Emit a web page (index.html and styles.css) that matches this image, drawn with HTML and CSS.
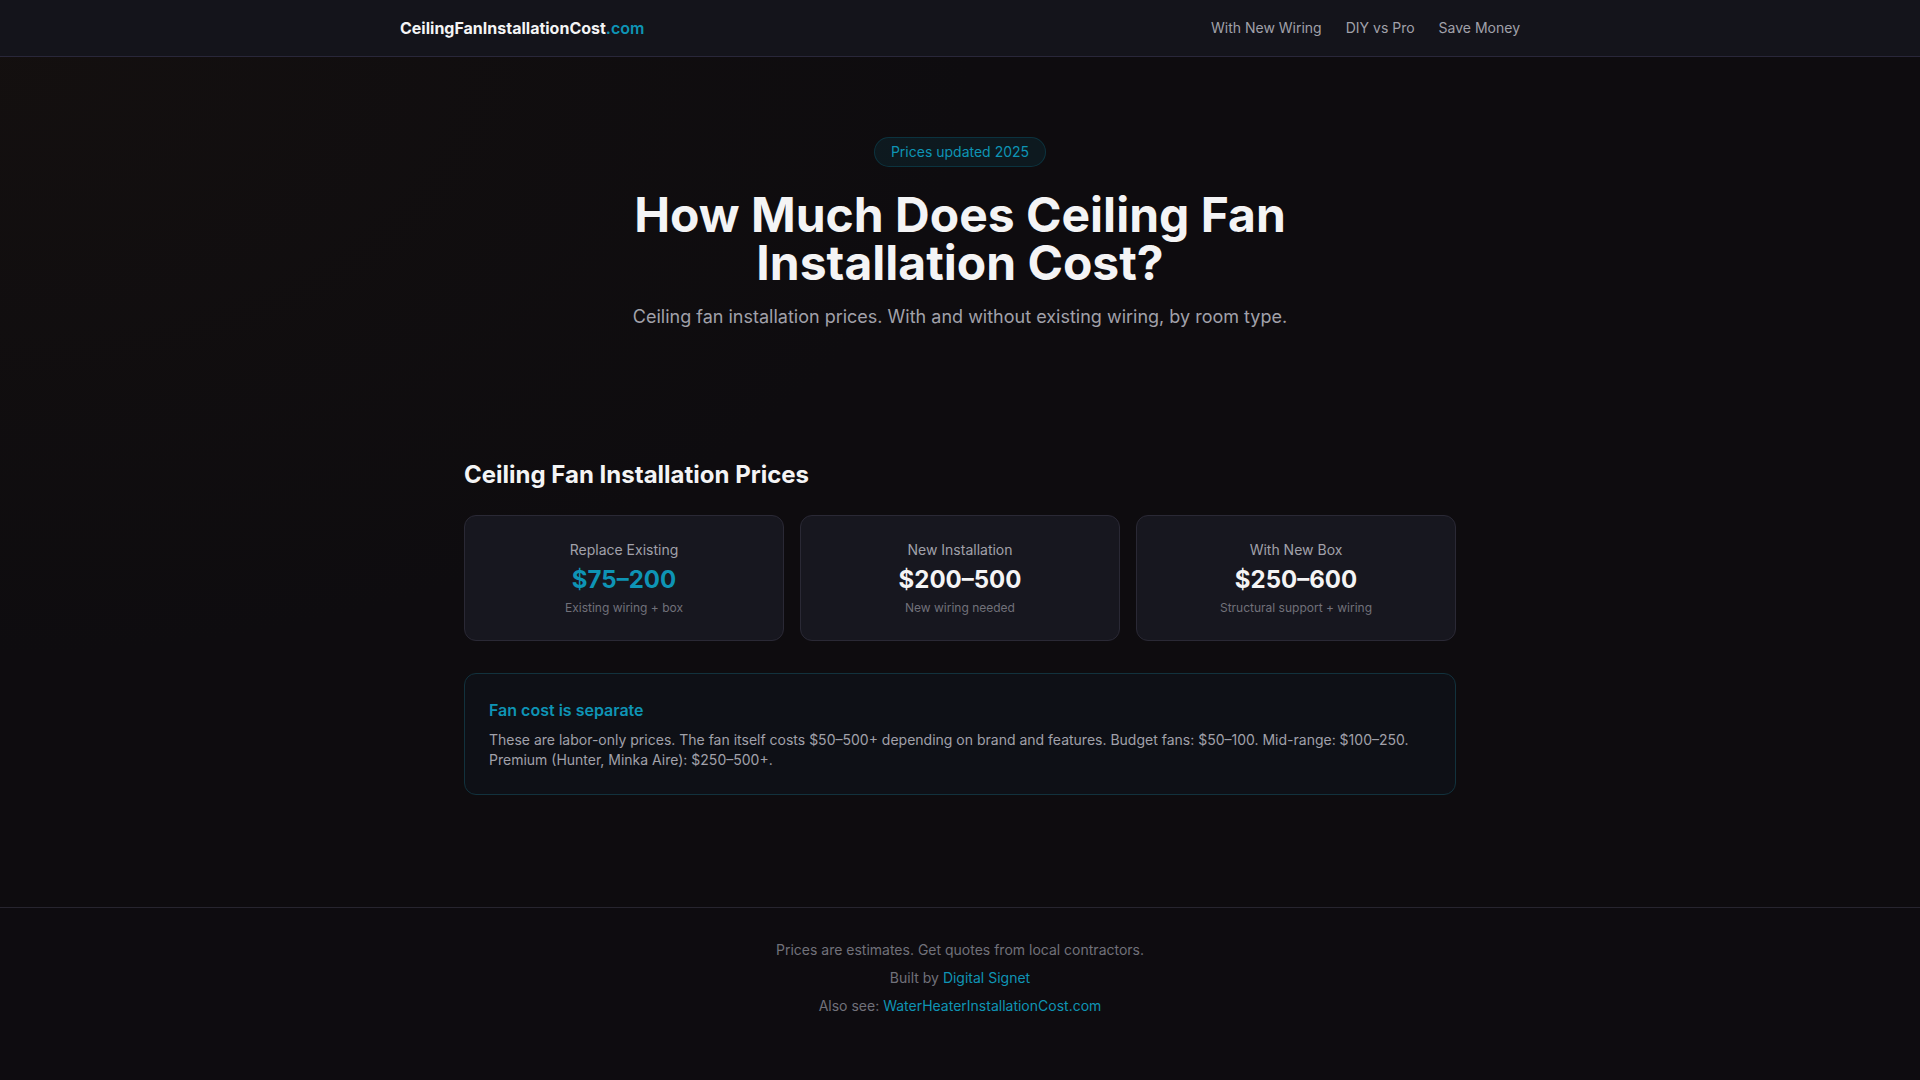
FILE: index.html
```html
<!DOCTYPE html>
<html lang="en">
<head>
<meta charset="utf-8">
<title>How Much Does Ceiling Fan Installation Cost?</title>
<link rel="stylesheet" href="styles.css">
</head>
<body>
<header class="site-header">
  <div class="header-inner">
    <a class="logo" href="#">CeilingFanInstallationCost<span class="logo-tld">.com</span></a>
    <nav class="nav">
      <a href="#">With New Wiring</a>
      <a href="#">DIY vs Pro</a>
      <a href="#">Save Money</a>
    </nav>
  </div>
</header>
<main class="main">
  <section class="hero">
    <span class="badge">Prices updated 2025</span>
    <h1 class="hero-title">How Much Does Ceiling Fan Installation Cost?</h1>
    <p class="hero-sub">Ceiling fan installation prices. With and without existing wiring, by room type.</p>
  </section>
  <section class="prices">
    <h2 class="section-title">Ceiling Fan Installation Prices</h2>
    <div class="cards">
      <div class="card">
        <div class="card-label">Replace Existing</div>
        <div class="card-price accent">$75–200</div>
        <div class="card-note">Existing wiring + box</div>
      </div>
      <div class="card">
        <div class="card-label">New Installation</div>
        <div class="card-price">$200–500</div>
        <div class="card-note">New wiring needed</div>
      </div>
      <div class="card">
        <div class="card-label">With New Box</div>
        <div class="card-price">$250–600</div>
        <div class="card-note">Structural support + wiring</div>
      </div>
    </div>
    <div class="callout">
      <h3 class="callout-title">Fan cost is separate</h3>
      <p class="callout-text">These are labor-only prices. The fan itself costs $50–500+ depending on brand and features. Budget fans: $50–100. Mid-range: $100–250. Premium (Hunter, Minka Aire): $250–500+.</p>
    </div>
  </section>
</main>
<footer class="site-footer">
  <p>Prices are estimates. Get quotes from local contractors.</p>
  <p>Built by <a href="#">Digital Signet</a></p>
  <p>Also see: <a href="#">WaterHeaterInstallationCost.com</a></p>
</footer>
</body>
</html>
```

FILE: styles.css
```css
* { box-sizing: border-box; }
html, body { margin: 0; padding: 0; }
body {
  font-family: Inter, "Noto Sans", "Liberation Sans", sans-serif;
  background: #0e0c10;
  color: #f4f4f5;
  min-height: 100vh;
  -webkit-font-smoothing: antialiased;
}
a { text-decoration: none; color: inherit; }

.site-header {
  height: 57px;
  background: #14141b;
  border-bottom: 1px solid #29273a;
}
.header-inner {
  max-width: 1152px;
  margin: 0 auto;
  padding: 0 16px;
  height: 56px;
  display: flex;
  align-items: center;
  justify-content: space-between;
}
.logo {
  font-size: 16px;
  font-weight: 700;
  color: #f4f4f5;
}
.logo-tld { color: #0e94b5; font-weight: 600; }
.nav { display: flex; gap: 24px; }
.nav a { font-size: 14px; color: #a1a1aa; line-height: 20px; }

.main {
  background: radial-gradient(ellipse 1300px 800px at 0% 0%, rgba(36, 26, 16, 0.25), rgba(0,0,0,0) 75%), #0e0c0f;
}
.hero {
  padding: 80px 16px 64px;
  display: flex;
  flex-direction: column;
  align-items: center;
  text-align: center;
}
.badge {
  display: inline-block;
  font-size: 14px;
  line-height: 20px;
  padding: 4px 16px;
  border-radius: 999px;
  color: #0e94b5;
  background: rgba(8, 145, 178, 0.1);
  border: 1px solid rgba(8, 145, 178, 0.22);
  margin-bottom: 24px;
}
.hero-title {
  margin: 0;
  max-width: 768px;
  font-size: 48px;
  line-height: 48px;
  font-weight: 700;
  letter-spacing: 0;
  color: #f4f4f5;
}
.hero-sub {
  margin: 16px 0 0;
  font-size: 18px;
  line-height: 28px;
  color: #a1a1aa;
}

.prices {
  max-width: 1024px;
  margin: 0 auto;
  padding: 64px 16px 112px;
}
.section-title {
  margin: 0 0 24px;
  font-size: 24px;
  line-height: 32px;
  font-weight: 700;
  color: #f4f4f5;
}
.cards {
  display: grid;
  grid-template-columns: repeat(3, 1fr);
  gap: 16px;
}
.card {
  background: #17171f;
  border: 1px solid #2a2935;
  border-radius: 12px;
  padding: 24px;
  text-align: center;
}
.card-label { font-size: 14px; line-height: 20px; color: #a1a1aa; }
.card-price {
  margin-top: 4px;
  font-size: 24px;
  line-height: 32px;
  font-weight: 700;
  color: #f4f4f5;
}
.card-price.accent { color: #0e94b5; }
.card-note { margin-top: 4px; font-size: 12px; line-height: 16px; color: #71717a; }

.callout {
  margin-top: 32px;
  background: #0e1016;
  border: 1px solid #12323d;
  border-radius: 12px;
  padding: 24px;
}
.callout-title {
  margin: 0;
  font-size: 16px;
  line-height: 24px;
  font-weight: 600;
  color: #0e94b5;
}
.callout-text {
  margin: 8px 0 0;
  font-size: 14px;
  line-height: 20px;
  color: #a1a1aa;
}

.site-footer {
  border-top: 1px solid #27252f;
  padding: 32px 16px 32px;
  text-align: center;
  background: #0e0c10;
}
.site-footer p {
  margin: 0 0 8px;
  font-size: 14px;
  line-height: 20px;
  color: #71717a;
}
.site-footer a { color: #0e94b5; }
```
